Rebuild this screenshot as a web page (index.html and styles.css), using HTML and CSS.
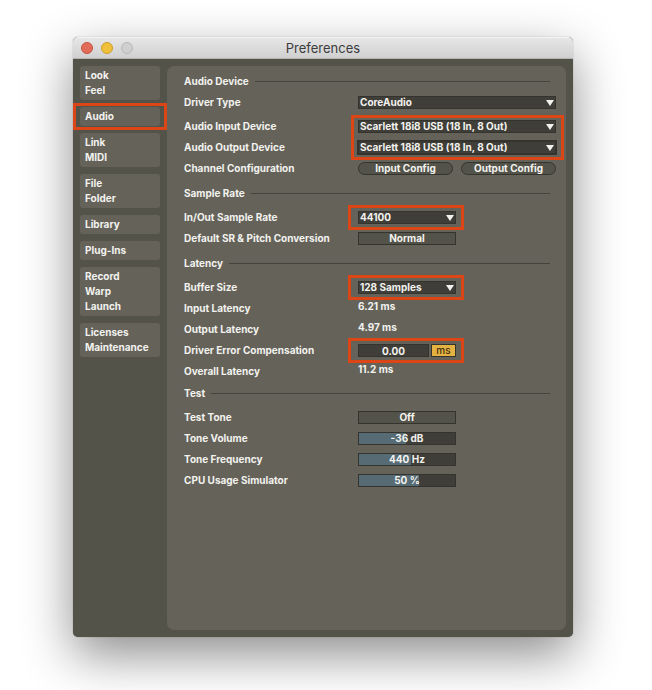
FILE: index.html
```
<!DOCTYPE html>
<html lang="en">
<head>
    <meta charset="UTF-8">
    <meta name="viewport" content="width=device-width, initial-scale=1.0">
    <title>Preferences</title>
    <link rel="stylesheet" href="styles.css">
</head>
<body>

    <div class="window">
        <header class="title-bar">
            <div class="window-buttons">
                <button class="dot close" aria-label="Close"></button>
                <button class="dot minimize" aria-label="Minimize"></button>
                <button class="dot" aria-label="Zoom" disabled></button>
            </div>
            <h1>Preferences</h1>
        </header>

        <div class="content">
            <nav class="tabs">
                <a href="#look">Look<br>Feel</a>
                <a href="#audio" class="marked tab-mark">Audio</a>
                <a href="#link">Link<br>MIDI</a>
                <a href="#file">File<br>Folder</a>
                <a href="#library">Library</a>
                <a href="#plugins">Plug-Ins</a>
                <a href="#record">Record<br>Warp<br>Launch</a>
                <a href="#licenses">Licenses<br>Maintenance</a>
            </nav>

            <main class="panel">
                <section>
                    <h2>Audio Device</h2>
                    <div class="row">
                        <label for="driver">Driver Type</label>
                        <div class="select wide">
                            <select id="driver"><option>CoreAudio</option></select>
                        </div>
                    </div>
                    <div class="devices">
                        <div class="row">
                            <label for="inputDevice">Audio Input Device</label>
                            <div class="select wide">
                                <select id="inputDevice"><option>Scarlett 18i8 USB (18 In, 8 Out)</option></select>
                            </div>
                        </div>
                        <div class="row">
                            <label for="outputDevice">Audio Output Device</label>
                            <div class="select wide active">
                                <select id="outputDevice"><option>Scarlett 18i8 USB (18 In, 8 Out)</option></select>
                            </div>
                        </div>
                        <div class="devices-mark"></div>
                    </div>
                    <div class="row">
                        <span class="label">Channel Configuration</span>
                        <div class="config">
                            <button class="field pill">Input Config</button>
                            <button class="field pill">Output Config</button>
                        </div>
                    </div>
                </section>

                <section class="spaced">
                    <h2>Sample Rate</h2>
                    <div class="row">
                        <label for="sampleRate">In/Out Sample Rate</label>
                        <div class="select marked">
                            <select id="sampleRate"><option>44100</option></select>
                        </div>
                    </div>
                    <div class="row">
                        <label for="conversion">Default SR &amp; Pitch Conversion</label>
                        <button class="field" id="conversion">Normal</button>
                    </div>
                </section>

                <section class="spaced">
                    <h2>Latency</h2>
                    <div class="row">
                        <label for="buffer">Buffer Size</label>
                        <div class="select marked">
                            <select id="buffer"><option>128 Samples</option></select>
                        </div>
                    </div>
                    <div class="row">
                        <span class="label">Input Latency</span>
                        <span class="value">6.21 ms</span>
                    </div>
                    <div class="row">
                        <span class="label">Output Latency</span>
                        <span class="value">4.97 ms</span>
                    </div>
                    <div class="row">
                        <label for="compensation">Driver Error Compensation</label>
                        <div class="compensation marked">
                            <input class="field number" type="text" id="compensation" value="0.00">
                            <button class="field unit">ms</button>
                        </div>
                    </div>
                    <div class="row">
                        <span class="label">Overall Latency</span>
                        <span class="value">11.2 ms</span>
                    </div>
                </section>

                <section class="test">
                    <h2>Test</h2>
                    <div class="row">
                        <label for="tone">Test Tone</label>
                        <button class="field" id="tone">Off</button>
                    </div>
                    <div class="row">
                        <label for="volume">Tone Volume</label>
                        <div class="slider" style="--fill: 49%">
                            <input type="range" id="volume" min="0" max="100" value="49">
                            <output for="volume">-36 dB</output>
                        </div>
                    </div>
                    <div class="row">
                        <label for="frequency">Tone Frequency</label>
                        <div class="slider" style="--fill: 54%">
                            <input type="range" id="frequency" min="0" max="100" value="54">
                            <output for="frequency">440 Hz</output>
                        </div>
                    </div>
                    <div class="row">
                        <label for="cpu">CPU Usage Simulator</label>
                        <div class="slider" style="--fill: 63%">
                            <input type="range" id="cpu" min="0" max="100" value="63">
                            <output for="cpu">50 %</output>
                        </div>
                    </div>
                </section>
            </main>
        </div>
    </div>

</body>
</html>
```
FILE: styles.css
```
* {
    box-sizing: border-box;
}
body {
    margin: 0;
    padding: 37px 79px 53px 73px;
    background-color: #fff;
    font-family: Inter, "Liberation Sans", sans-serif;
    font-size: 10px;
    font-weight: 700;
    line-height: 15px;
    color: #f2f2ee;
}
button, select, input {
    margin: 0;
    font: inherit;
    color: inherit;
}
.window {
    display: flex;
    flex-direction: column;
    min-height: calc(100vh - 90px);
    border-radius: 5px;
    background-color: #53534a;
    box-shadow: 0 0 1px rgba(0, 0, 0, 0.5), 0 18px 50px rgba(0, 0, 0, 0.45);
}
.title-bar {
    position: relative;
    display: flex;
    justify-content: center;
    height: 22px;
    border-radius: 5px 5px 0 0;
    border-top: 1px solid #f4f4f4;
    border-bottom: 1px solid #b4b4b4;
    background: linear-gradient(#e6e6e6, #d0d0d0);
}
.title-bar h1 {
    margin: 0;
    font-size: 13px;
    font-weight: 400;
    line-height: 21px;
    color: #3c3c3c;
}
.window-buttons {
    position: absolute;
    left: 8px;
    top: 4px;
    display: flex;
    gap: 8px;
}
.dot {
    width: 12px;
    height: 12px;
    padding: 0;
    border: 1px solid #b9b9b9;
    border-radius: 50%;
    background-color: #cfcfcf;
}
.close {
    border-color: #c9513f;
    background-color: #e26b5a;
}
.minimize {
    border-color: #cf9f2b;
    background-color: #efc03b;
}
.content {
    flex: 1;
    display: flex;
    gap: 7px;
    padding: 7px;
}
.tabs {
    flex: none;
    display: flex;
    flex-direction: column;
    gap: 7px;
    width: 80px;
}
.tabs a {
    padding: 2px 5px;
    border-radius: 3px;
    background-color: #65625a;
    color: inherit;
    text-decoration: none;
}
.panel {
    flex: 1;
    min-width: 0;
    padding: 5px 10px 20px 17px;
    border-radius: 7px;
    background-color: #65625a;
}
.spaced {
    margin-top: 4px;
}
.test {
    margin-top: 1px;
}
h2 {
    display: flex;
    align-items: center;
    gap: 6px;
    height: 21px;
    margin: 0 6px 3px 0;
    font-size: 10px;
    font-weight: 700;
}
h2::after {
    content: "";
    flex: 1;
    height: 1px;
    background-color: #45433d;
}
section:first-child h2 {
    margin-bottom: 0;
}
.row {
    display: flex;
    align-items: center;
    height: 21px;
}
.row label,
.label {
    flex: none;
    width: 174px;
}
.field {
    width: 98px;
    height: 13px;
    padding: 0;
    border: 1px solid #35332e;
    background-color: #53534a;
    line-height: 11px;
    text-align: center;
}
.config {
    display: flex;
    flex: 1;
    gap: 8px;
    min-width: 0;
}
.pill {
    flex: 1;
    min-width: 0;
    border-radius: 7px;
}
.value {
    padding-bottom: 4px;
}

/* drop-downs */
.select {
    position: relative;
    width: 98px;
    height: 13px;
}
.wide {
    flex: 1;
    min-width: 0;
}
.select select {
    display: block;
    width: 100%;
    height: 13px;
    padding: 0 1px;
    appearance: none;
    border: 1px solid #35332e;
    border-radius: 0;
    background-color: #403e38;
    line-height: 11px;
}
.active select {
    box-shadow: 0 0 0 1px #35332e;
}
.select::before {
    content: "";
    position: absolute;
    right: 2px;
    top: 4px;
    border: 4px solid transparent;
    border-top: 6px solid #f2f2ee;
    border-bottom: 0;
}

/* error compensation */
.compensation {
    display: flex;
    gap: 2px;
    width: 98px;
}
.number {
    flex: 1;
    min-width: 0;
    background-color: #403e38;
}
.unit {
    width: 25px;
    background-color: #e5b242;
    color: #403010;
    font-weight: 500;
}

/* value sliders */
.slider {
    position: relative;
    width: 98px;
    height: 13px;
}
.slider input {
    display: block;
    width: 100%;
    height: 13px;
    appearance: none;
    border: 1px solid #35332e;
    background: linear-gradient(to right, #566b74 var(--fill), #403e38 var(--fill));
}
.slider input::-webkit-slider-thumb {
    appearance: none;
    width: 0;
    height: 0;
}
.slider output {
    position: absolute;
    inset: 0;
    line-height: 13px;
    text-align: center;
    pointer-events: none;
}

/* orange highlight frames */
.marked,
.devices {
    position: relative;
}
.devices {
    margin-top: 3px;
}
.marked::after,
.devices-mark {
    content: "";
    position: absolute;
    inset: -6px -8px -6px -10px;
    border: 3px solid #dc4515;
    pointer-events: none;
}
.tab-mark::after {
    inset: -4px -7px -4px -7px;
}
.devices-mark {
    inset: -1px -8px -2px 167px;
}
```
